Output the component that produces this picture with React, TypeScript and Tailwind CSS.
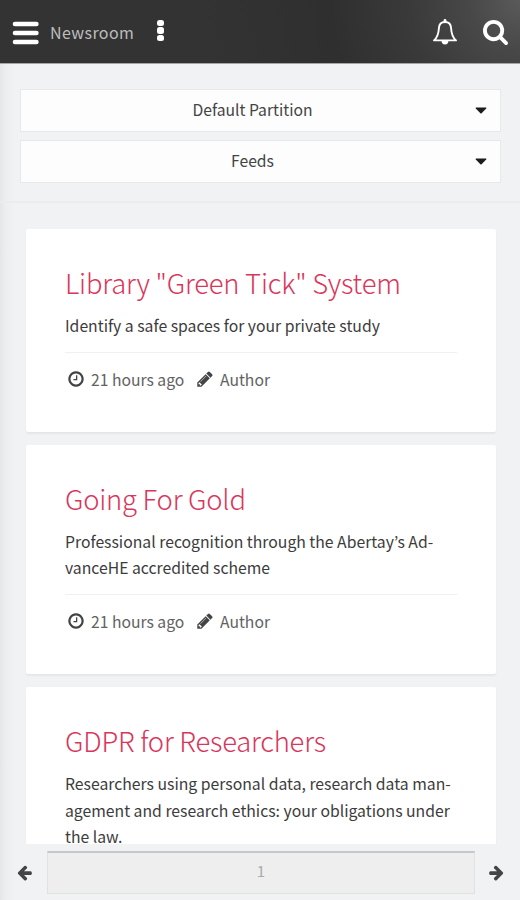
import React from "react";

type IconProps = { d: string; className?: string; viewBox?: string };

type Article = { title: string; lines: string[]; age?: string; author?: string };

const ICONS = {
  search:
    "M1216 832q0-185-131.5-316.5t-316.5-131.5-316.5 131.5-131.5 316.5 131.5 316.5 316.5 131.5 316.5-131.5 131.5-316.5zm512 832q0 52-38 90t-90 38q-54 0-90-38l-343-342q-179 124-399 124-143 0-273.5-55.5t-225-150-150-225-55.5-273.5 55.5-273.5 150-225 225-150 273.5-55.5 273.5 55.5 225 150 150 225 55.5 273.5q0 220-124 399l343 343q37 37 37 90z",
  clock:
    "M1024 544v448q0 14-9 23t-23 9h-320q-14 0-23-9t-9-23v-64q0-14 9-23t23-9h224v-352q0-14 9-23t23-9h64q14 0 23 9t9 23zm416 352q0-148-73-273t-198-198-273-73-273 73-198 198-73 273 73 273 198 198 273 73 273-73 198-198 73-273zm224 0q0 209-103 385.5t-279.5 279.5-385.5 103-385.5-103-279.5-279.5-103-385.5 103-385.5 279.5-279.5 385.5-103 385.5 103 279.5 279.5 103 385.5z",
  pencil:
    "M491 1536l91-91-235-235-91 91v107h128v128h107zm523-928q0-22-22-22-10 0-17 7l-542 542q-7 7-7 17 0 22 22 22 10 0 17-7l542-542q7-7 7-17zm-54-192l416 416-832 832h-416v-416zm683 96q0 53-37 90l-166 166-416-416 166-165q36-38 90-38 53 0 91 38l235 234q37 39 37 91z",
  arrow:
    "M1664 896v128q0 53-32.5 90.5t-84.5 37.5h-704l293 294q38 36 38 90t-38 90l-75 76q-37 37-90 37-52 0-91-37l-651-652q-37-37-37-90 0-52 37-91l651-650q38-38 91-38 52 0 90 38l75 74q38 38 38 91t-38 91l-293 293h704q52 0 84.5 37.5t32.5 90.5z",
};

const articles: Article[] = [
  {
    title: 'Library "Green Tick" System',
    lines: ["Identify a safe spaces for your private study"],
    age: "21 hours ago",
    author: "Author",
  },
  {
    title: "Going For Gold",
    lines: ["Professional recognition through the Abertay’s Ad-", "vanceHE accredited scheme"],
    age: "21 hours ago",
    author: "Author",
  },
  {
    title: "GDPR for Researchers",
    lines: [
      "Researchers using personal data, research data man-",
      "agement and research ethics: your obligations under",
      "the law.",
    ],
  },
];

function Icon({ d, className, viewBox = "0 0 1792 1792" }: IconProps) {
  return (
    <svg viewBox={viewBox} className={className} fill="currentColor" aria-hidden="true">
      <path d={d} />
    </svg>
  );
}

function Header() {
  return (
    <header className="flex h-16 shrink-0 items-center border-b border-[#a5a5a5] bg-[#333] bg-[radial-gradient(circle_at_100%_0%,#5a5a5a_0,#484848_50px,#3a3a3a_110px,#2f2f2f_190px,#333_320px)] pl-3 pr-3 text-white">
      <button aria-label="Menu">
        {/* three rounded bars */}
        <svg viewBox="0 0 28 26" className="h-[26px] w-7 translate-y-px" stroke="currentColor" strokeWidth="4.6" strokeLinecap="round">
          <path d="M3 4h21.4M3 13h21.4M3 22h21.4" />
        </svg>
      </button>
      <span className="ml-[10px] w-[85px] whitespace-nowrap text-[16px] tracking-[0.4px] leading-6 text-[#bdbdbd]">
        Newsroom
      </span>
      <button aria-label="More" className="ml-[22px] flex translate-y-[-1px] flex-col gap-px">
        <span className="h-[6.5px] w-[7px] rounded-[2.5px] bg-white" />
        <span className="h-[6.5px] w-[7px] rounded-[2.5px] bg-white" />
        <span className="h-[6.5px] w-[7px] rounded-[2.5px] bg-white" />
      </button>
      <button aria-label="Notifications" className="ml-auto">
        <svg viewBox="0 0 26 28" className="h-7 w-[26px]" fill="none" stroke="currentColor">
          <path
            d="M13 4c-3.8 0-5.9 2.5-6.1 6.2-.3 5.6-1.1 8.8-4.9 12.2h22c-3.8-3.4-4.6-6.6-4.9-12.2C18.9 6.500 16.8 4 13 4z"
            strokeWidth="1.9"
            strokeLinejoin="round"
          />
          <path d="M13 2.400v1.400" strokeWidth="2.8" strokeLinecap="round" />
          <path d="M9.600 23h6.800a3.400 3.400 0 0 1-6.800 0z" fill="currentColor" stroke="none" />
        </svg>
      </button>
      <button aria-label="Search" className="ml-[25px]">
        <Icon d={ICONS.search} viewBox="64 128 1664 1664" className="h-[25px] w-[25px] translate-y-px" />
      </button>
    </header>
  );
}

function Select({ label }: { label: string }) {
  return (
    <button className="flex h-[43px] w-full items-center border border-[#e6e9eb] bg-[#fdfdfd] pb-px pl-[9px] pr-[13px] text-[15.7px] text-[#444]">
      <span className="flex-1 text-center">{label}</span>
      <svg viewBox="0 0 12 7" className="h-[7px] w-3 text-[#1c1c1c]" fill="currentColor">
        <path d="M1 .5h10q.8.3.2 1L6.6 6.2q-.6.5-1.2 0L.8 1.5Q.2.8 1 .5z" />
      </svg>
    </button>
  );
}

function ArticleCard({ title, lines, age, author }: Article) {
  return (
    <article className="shrink-0 rounded-[2px] bg-white px-[39px] pb-[39px] pt-[33px] shadow-[0_2px_2px_rgba(0,0,0,0.05)]">
      <h2 className="whitespace-nowrap text-[27.4px] font-light leading-10 tracking-[-0.22px] text-[#d9365c]">
        {title}
      </h2>
      <div className="mt-[11px] text-[15.75px] leading-[26.3px] text-[#3c3c3c]">
        {lines.map((line) => (
          <p key={line} className="whitespace-nowrap">
            {line}
          </p>
        ))}
      </div>
      {age && (
        <div className="mt-[13px] flex items-center border-t border-[#f0f0f0] pl-[2px] pt-[14px] text-[15.7px] leading-[26px] text-[#626262]">
          <Icon d={ICONS.clock} className="h-[18px] w-[18px] -translate-y-px text-[#444]" />
          <span className="ml-[6px] w-[94px] whitespace-nowrap">{age}</span>
          <Icon d={ICONS.pencil} className="ml-[11px] h-[18px] w-[18px] -translate-y-px text-[#444]" />
          <span className="ml-[6px]">{author}</span>
        </div>
      )}
    </article>
  );
}

export default function App() {
  return (
    <div className="flex h-[900px] w-[520px] flex-col overflow-hidden bg-[#f0f2f4] font-['Noto_Sans_CJK_KR','Open_Sans',sans-serif]">
      <Header />
      <main className="flex min-h-0 flex-1 flex-col bg-[linear-gradient(to_right,#e4e6e8_0,#eceef0_6px,#f0f2f4_16px)]">
        <div className="flex h-[139px] shrink-0 flex-col gap-[8px] border-b-2 border-[#e9edef] pl-5 pr-[19px] pt-[25px]">
          <Select label="Default Partition" />
          <Select label="Feeds" />
        </div>
        <section className="flex h-[641px] shrink-0 flex-col gap-[13px] overflow-hidden pl-[26px] pr-[24.5px] pt-[25.5px]">
          {articles.map((article) => (
            <ArticleCard key={article.title} {...article} />
          ))}
        </section>
        <footer className="flex flex-1 items-start pt-[7px] text-[#444]">
          <button aria-label="Previous page" className="flex h-[42px] w-[47px] items-center pl-4">
            <Icon d={ICONS.arrow} className="h-[17px] w-[17px]" />
          </button>
          <div className="flex h-[43px] w-[428px] items-center justify-center border border-t-2 border-[#dde2e3] border-t-[#c3c8ca] bg-[#eee] pb-[3px] text-[15px] text-[#aaa]">
            1
          </div>
          <button aria-label="Next page" className="flex h-[42px] flex-1 items-center pl-[13px]">
            <Icon d={ICONS.arrow} className="h-[17px] w-[17px] -scale-x-100" />
          </button>
        </footer>
      </main>
    </div>
  );
}
